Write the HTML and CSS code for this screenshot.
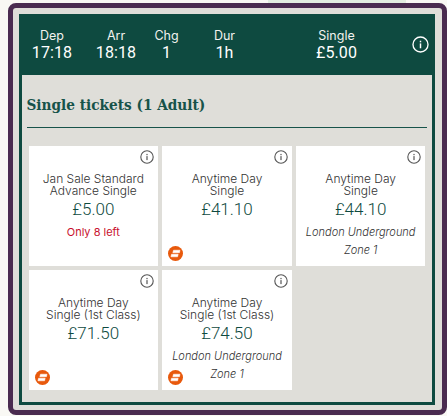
FILE: index.html
```html
<!DOCTYPE html>
<html lang="en">
<head>
<meta charset="utf-8">
<title>Single tickets</title>
<link rel="stylesheet" href="styles.css">
</head>
<body>
<svg class="defs" width="0" height="0" aria-hidden="true">
  <symbol id="info" viewBox="0 0 14 14">
    <circle cx="7" cy="7" r="6.2" fill="none" stroke="currentColor" stroke-width="1.1"/>
    <rect x="6.4" y="6.1" width="1.2" height="4" fill="currentColor"/>
    <rect x="6.4" y="3.9" width="1.2" height="1.3" fill="currentColor"/>
  </symbol>
  <symbol id="tube" viewBox="0 0 15 15">
    <circle cx="7.5" cy="7.5" r="7.5" fill="#e8590c"/>
    <path d="M5.500 4.200h6.500l-.5 2.500H4.800zM3.500 8.200h6.700l-.6 2.600H2.900z" fill="#fff" stroke="#fff" stroke-width=".5" stroke-linejoin="round"/>
  </symbol>
</svg>
<div class="top-strip"><span class="strip-white"></span><span class="strip-green"></span></div>
<main class="frame">
  <section class="panel">
    <header class="summary">
      <div class="col col-dep"><span class="lbl">Dep</span><span class="val">17:18</span></div>
      <div class="col col-arr"><span class="lbl">Arr</span><span class="val">18:18</span></div>
      <div class="col col-chg"><span class="lbl">Chg</span><span class="val">1</span></div>
      <div class="col col-dur"><span class="lbl">Dur</span><span class="val">1h</span></div>
      <div class="col col-single"><span class="lbl">Single</span><span class="val">£5.00</span></div>
      <svg class="summary-info"><use href="#info"/></svg>
    </header>
    <div class="body">
      <h2 class="title">Single tickets (1 Adult)</h2>
      <div class="grid">
        <article class="card">
          <svg class="card-info"><use href="#info"/></svg>
          <p class="name">Jan Sale Standard<br>Advance Single</p>
          <p class="price">£5.00</p>
          <p class="left">Only 8 left</p>
        </article>
        <article class="card">
          <svg class="card-info"><use href="#info"/></svg>
          <p class="name">Anytime Day<br>Single</p>
          <p class="price">£41.10</p>
          <svg class="tube"><use href="#tube"/></svg>
        </article>
        <article class="card">
          <svg class="card-info"><use href="#info"/></svg>
          <p class="name">Anytime Day<br>Single</p>
          <p class="price">£44.10</p>
          <p class="note">London Underground</p>
          <p class="note">Zone 1</p>
        </article>
        <article class="card">
          <svg class="card-info"><use href="#info"/></svg>
          <p class="name">Anytime Day<br>Single (1st Class)</p>
          <p class="price">£71.50</p>
          <svg class="tube"><use href="#tube"/></svg>
        </article>
        <article class="card">
          <svg class="card-info"><use href="#info"/></svg>
          <p class="name">Anytime Day<br>Single (1st Class)</p>
          <p class="price">£74.50</p>
          <p class="note">London Underground</p>
          <p class="note">Zone 1</p>
          <svg class="tube"><use href="#tube"/></svg>
        </article>
      </div>
    </div>
  </section>
</main>
</body>
</html>
```
FILE: styles.css
```css
* { box-sizing: border-box; }
html, body { margin: 0; padding: 0; }
body {
  width: 447px;
  height: 416px;
  overflow: hidden;
  background: #f9f8f4;
  font-family: "Inter", "Liberation Sans", sans-serif;
}
.defs { position: absolute; }
.top-strip { display: flex; height: 3px; }
.strip-white { width: 268px; background: #f9f8f4; }
.strip-green { width: 138px; background: #e2ede0; }
.frame {
  margin-left: 8px;
  width: 438.5px;
  height: 412px;
  border: 5.5px solid #4a2b50;
  border-radius: 8px;
  background: #dfded9;
  padding: 5.5px 5px 5px 5.5px;
}
.panel {
  width: 416.5px;
  height: 391px;
  background: #0e4a40;
  display: flex;
  flex-direction: column;
}
.summary {
  height: 61px;
  flex: none;
  display: flex;
  color: #fff;
  position: relative;
  padding-left: 14px;
}
.col {
  display: flex;
  flex-direction: column;
  align-items: center;
  padding-top: 15px;
}
.lbl { font-size: 12.5px; line-height: 14px; color: #f2f2ee; }
.val { font-family: "Roboto", sans-serif; font-size: 16px; line-height: 20px; letter-spacing: 0.1px; }
.col-dep { width: 39px; }
.col-arr { width: 39px; margin-left: 25px; }
.col-chg { width: 24px; margin-left: 19px; }
.col-dur { width: 24px; margin-left: 34px; }
.col-single { width: 50px; position: absolute; left: 293px; }
.summary-info {
  position: absolute;
  right: 6px;
  top: 22px;
  width: 17px;
  height: 17px;
  color: #fff;
}
.body {
  flex: 1;
  margin: 0 3px 3px 3px;
  background: #dfded9;
  padding: 0 5px 0 5px;
}
.title {
  margin: 0;
  height: 53px;
  padding-top: 20px;
  border-bottom: 1px solid #17534a;
  font-family: "DejaVu Serif Condensed", "DejaVu Serif", serif;
  font-size: 15.2px;
  line-height: 20px;
  font-weight: 700;
  color: #17534a;
}
.grid {
  display: grid;
  grid-template-columns: repeat(3, 129.67px);
  grid-auto-rows: 120px;
  gap: 4px;
  margin: 18px 0 0 2px;
}
.card {
  background: #fff;
  position: relative;
  text-align: center;
  padding-top: 27px;
  color: #444;
}
.card p { margin: 0; }
.card-info {
  position: absolute;
  top: 4px;
  right: 4px;
  width: 14px;
  height: 14px;
  color: #555;
}
.name { font-size: 12px; line-height: 12px; font-weight: 300; color: #333; }
.price { font-family: "Roboto", sans-serif; font-size: 17px; font-weight: 300; line-height: 20px; margin-top: 2px !important; color: #0e4a40; }
.left { font-size: 11px; line-height: 14px; margin-top: 6px !important; color: #c8102e; }
.note { font-size: 11px; font-weight: 300; line-height: 14px; font-style: italic; margin-top: 6px !important; color: #333; }
.note + .note { margin-top: 4px !important; }
.tube {
  position: absolute;
  left: 6px;
  bottom: 5px;
  width: 15px;
  height: 15px;
}
```
